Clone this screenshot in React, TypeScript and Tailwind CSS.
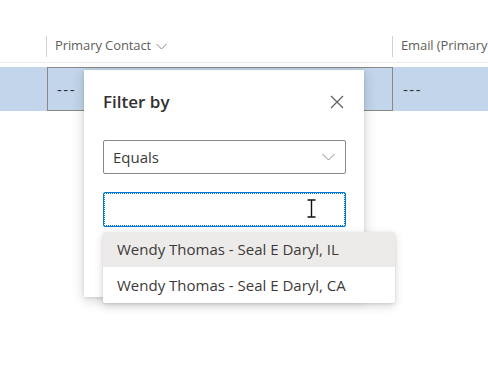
import React from "react";

export default function App() {
  const font = { fontFamily: '"Open Sans", "Noto Sans", Arial, sans-serif' };
  return (
    <div
      className="relative w-[488px] h-[385px] overflow-hidden bg-white text-[#323130]"
      style={font}
    >
      {/* Header */}
      <div className="pt-[30px]">
        <div className="flex h-[33px] items-center border-b border-[#edebe9]">
          <div className="w-[46px] shrink-0" />
          <div className="flex w-[346px] shrink-0 items-center">
            <div className="h-[21px] w-px bg-[#d2d0ce]" />
            <span className="ml-[8px] text-[13px] text-[#605e5c] tracking-[-0.1px]">
              Primary Contact
            </span>
            <svg className="ml-[5px]" width="11" height="7" viewBox="0 0 11 7">
              <path d="M0.5 1 L5.5 6 L10.5 1" fill="none" stroke="#8a8886" strokeWidth="1" />
            </svg>
          </div>
          <div className="flex items-center">
            <div className="h-[21px] w-px bg-[#d2d0ce]" />
            <span className="ml-[8px] whitespace-nowrap text-[13px] text-[#605e5c] tracking-[-0.1px]">
              Email (Primary
            </span>
          </div>
        </div>
      </div>

      {/* Selected row */}
      <div className="mt-[4px] flex h-[44px] bg-[#c2d5ea]">
        <div className="w-[47px] shrink-0" />
        <div className="flex w-[346px] shrink-0 items-center border border-[#8a8886] pl-[9px] text-[15px] tracking-[1.5px]">
          ---
        </div>
        <div className="flex items-center pl-[10px] text-[15px] tracking-[1.5px]">---</div>
      </div>

      {/* Filter popup */}
      <div className="absolute left-[84px] top-[70px] h-[227px] w-[280px] bg-white shadow-[0_3px_12px_rgba(0,0,0,0.18),0_1px_3px_rgba(0,0,0,0.1)]">
        <div className="flex h-[62px] items-center justify-between pl-[19px] pr-[19px] pt-[1px]">
          <span className="text-[17px] font-semibold text-[#323130]">Filter by</span>
          <svg width="14" height="14" viewBox="0 0 14 14" className="mr-[1px]">
            <path d="M1 1 L13 13 M13 1 L1 13" stroke="#605e5c" strokeWidth="1.2" fill="none" />
          </svg>
        </div>
        <div className="px-[19px]">
          <div className="mt-[8px] flex h-[34px] w-[243px] items-center justify-between rounded-[2px] border border-[#8a8886] pl-[9px] pr-[10px]">
            <span className="text-[15px] text-[#3b3a39]">Equals</span>
            <svg width="13" height="8" viewBox="0 0 13 8">
              <path d="M0.5 1 L6.5 7 L12.5 1" fill="none" stroke="#8a8886" strokeWidth="1" />
            </svg>
          </div>
          <div className="relative mt-[18px] h-[35px] w-[243px] rounded-[2px] border border-[#0078d4] outline-1 outline-dotted outline-[#0078d4] -outline-offset-2">
            <svg
              className="absolute left-[203px] top-[6px]"
              width="9"
              height="19"
              viewBox="0 0 9 19"
            >
              <path
                d="M0.5 1 H8.5 M4.5 1 V18 M0.5 18 H8.5"
                stroke="#111"
                strokeWidth="1.4"
                fill="none"
              />
            </svg>
          </div>
        </div>
      </div>

      {/* Suggestions */}
      <div className="absolute left-[103px] top-[232px] w-[292px] overflow-hidden rounded-[2px] bg-white shadow-[0_3px_10px_rgba(0,0,0,0.16),0_1px_3px_rgba(0,0,0,0.1)]">
        <div className="flex h-[35px] items-center bg-[#edebe9] pl-[14px] text-[15px] text-[#3b3a39]">
          Wendy Thomas - Seal E Daryl, IL
        </div>
        <div className="flex h-[36px] items-center pl-[14px] text-[15px] text-[#3b3a39]">
          Wendy Thomas - Seal E Daryl, CA
        </div>
      </div>
    </div>
  );
}
